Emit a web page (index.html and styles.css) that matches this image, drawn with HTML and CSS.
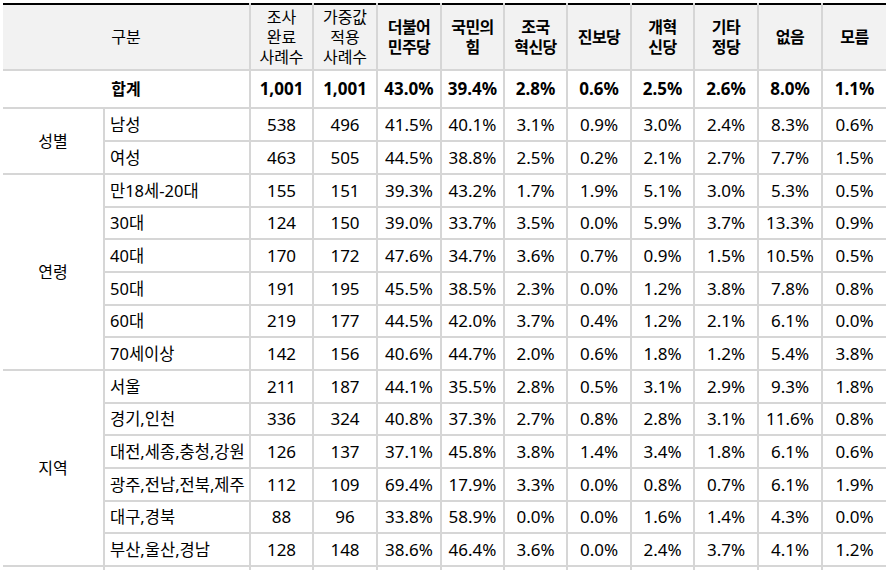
FILE: index.html
```html
<!DOCTYPE html>
<html lang="ko">
<head>
<meta charset="utf-8">
<title>정당 지지도</title>
<link rel="stylesheet" href="styles.css">
</head>
<body>
<table class="tbl">
  <colgroup>
    <col class="c-cat"><col class="c-sub">
    <col class="c-n"><col class="c-n2"><col class="c-n2"><col class="c-n"><col class="c-n"><col class="c-n2"><col class="c-n"><col class="c-n2"><col class="c-n2"><col class="c-n2">
  </colgroup>
  <thead>
    <tr class="head">
      <th colspan="2" class="reg">구분</th>
      <th class="reg">조사<br>완료<br>사례수</th>
      <th class="reg">가중값<br>적용<br>사례수</th>
      <th>더불어<br>민주당</th>
      <th>국민의<br>힘</th>
      <th>조국<br>혁신당</th>
      <th>진보당</th>
      <th>개혁<br>신당</th>
      <th>기타<br>정당</th>
      <th>없음</th>
      <th>모름</th>
    </tr>
  </thead>
  <tbody>
    <tr class="total">
      <td colspan="2" class="lbl">합계</td><td>1,001</td><td>1,001</td><td>43.0%</td><td>39.4%</td><td>2.8%</td><td>0.6%</td><td>2.5%</td><td>2.6%</td><td>8.0%</td><td>1.1%</td>
    </tr>
    <tr class="r33">
      <td rowspan="2" class="cat">성별</td><td class="sub">남성</td><td>538</td><td>496</td><td>41.5%</td><td>40.1%</td><td>3.1%</td><td>0.9%</td><td>3.0%</td><td>2.4%</td><td>8.3%</td><td>0.6%</td>
    </tr>
    <tr class="r33">
      <td class="sub">여성</td><td>463</td><td>505</td><td>44.5%</td><td>38.8%</td><td>2.5%</td><td>0.2%</td><td>2.1%</td><td>2.7%</td><td>7.7%</td><td>1.5%</td>
    </tr>
    <tr class="r33">
      <td rowspan="6" class="cat">연령</td><td class="sub">만18세-20대</td><td>155</td><td>151</td><td>39.3%</td><td>43.2%</td><td>1.7%</td><td>1.9%</td><td>5.1%</td><td>3.0%</td><td>5.3%</td><td>0.5%</td>
    </tr>
    <tr class="r32">
      <td class="sub">30대</td><td>124</td><td>150</td><td>39.0%</td><td>33.7%</td><td>3.5%</td><td>0.0%</td><td>5.9%</td><td>3.7%</td><td>13.3%</td><td>0.9%</td>
    </tr>
    <tr class="r33">
      <td class="sub">40대</td><td>170</td><td>172</td><td>47.6%</td><td>34.7%</td><td>3.6%</td><td>0.7%</td><td>0.9%</td><td>1.5%</td><td>10.5%</td><td>0.5%</td>
    </tr>
    <tr class="r33">
      <td class="sub">50대</td><td>191</td><td>195</td><td>45.5%</td><td>38.5%</td><td>2.3%</td><td>0.0%</td><td>1.2%</td><td>3.8%</td><td>7.8%</td><td>0.8%</td>
    </tr>
    <tr class="r32">
      <td class="sub">60대</td><td>219</td><td>177</td><td>44.5%</td><td>42.0%</td><td>3.7%</td><td>0.4%</td><td>1.2%</td><td>2.1%</td><td>6.1%</td><td>0.0%</td>
    </tr>
    <tr class="r33">
      <td class="sub">70세이상</td><td>142</td><td>156</td><td>40.6%</td><td>44.7%</td><td>2.0%</td><td>0.6%</td><td>1.8%</td><td>1.2%</td><td>5.4%</td><td>3.8%</td>
    </tr>
    <tr class="r33">
      <td rowspan="6" class="cat">지역</td><td class="sub">서울</td><td>211</td><td>187</td><td>44.1%</td><td>35.5%</td><td>2.8%</td><td>0.5%</td><td>3.1%</td><td>2.9%</td><td>9.3%</td><td>1.8%</td>
    </tr>
    <tr class="r32">
      <td class="sub">경기,인천</td><td>336</td><td>324</td><td>40.8%</td><td>37.3%</td><td>2.7%</td><td>0.8%</td><td>2.8%</td><td>3.1%</td><td>11.6%</td><td>0.8%</td>
    </tr>
    <tr class="r33">
      <td class="sub">대전,세종,충청,강원</td><td>126</td><td>137</td><td>37.1%</td><td>45.8%</td><td>3.8%</td><td>1.4%</td><td>3.4%</td><td>1.8%</td><td>6.1%</td><td>0.6%</td>
    </tr>
    <tr class="r33">
      <td class="sub">광주,전남,전북,제주</td><td>112</td><td>109</td><td>69.4%</td><td>17.9%</td><td>3.3%</td><td>0.0%</td><td>0.8%</td><td>0.7%</td><td>6.1%</td><td>1.9%</td>
    </tr>
    <tr class="r32">
      <td class="sub">대구,경북</td><td>88</td><td>96</td><td>33.8%</td><td>58.9%</td><td>0.0%</td><td>0.0%</td><td>1.6%</td><td>1.4%</td><td>4.3%</td><td>0.0%</td>
    </tr>
    <tr class="r33">
      <td class="sub">부산,울산,경남</td><td>128</td><td>148</td><td>38.6%</td><td>46.4%</td><td>3.6%</td><td>0.0%</td><td>2.4%</td><td>3.7%</td><td>4.1%</td><td>1.2%</td>
    </tr>
    <tr class="r33">
      <td class="cat"></td><td class="sub"></td><td></td><td></td><td></td><td></td><td></td><td></td><td></td><td></td><td></td><td></td>
    </tr>
  </tbody>
</table>
</body>
</html>
```

FILE: styles.css
```css
html, body {
  margin: 0;
  padding: 0;
  background: #ffffff;
}

body {
  padding: 3px 0 0 3px;
  font-family: "Noto Sans", "Noto Sans CJK KR", sans-serif;
  color: #000000;
}

.tbl {
  border-collapse: collapse;
  table-layout: fixed;
  width: 883px;
  font-size: 17px;
}

.c-cat { width: 101px; }
.c-sub { width: 146px; }
.c-n { width: 63px; }
.c-n2 { width: 64px; }

.tbl th,
.tbl td {
  border: 2px solid #d6d6d6;
  padding: 0;
  text-align: center;
  vertical-align: middle;
  white-space: nowrap;
  overflow: hidden;
  line-height: 20px;
}

.tbl tr > :first-child { border-left: none; }
.tbl tr > :last-child { border-right: none; }
.tbl td.cat { border-left: none; }

.head th {
  background: #f2f2f2;
  border-top: 2px solid #000000;
  height: 64px;
  font-size: 16px;
  font-weight: 700;
  letter-spacing: -0.5px;
}

.head th.reg {
  font-weight: 400;
  letter-spacing: 0;
}

.total td {
  height: 36px;
  font-weight: 700;
}

.r33 td { height: 31px; }
.r32 td { height: 30px; }

.tbl td.cat,
.tbl td.lbl {
  font-size: 16px;
}

.tbl td.sub {
  text-align: left;
  padding-left: 5px;
  font-size: 16.5px;
}
```
